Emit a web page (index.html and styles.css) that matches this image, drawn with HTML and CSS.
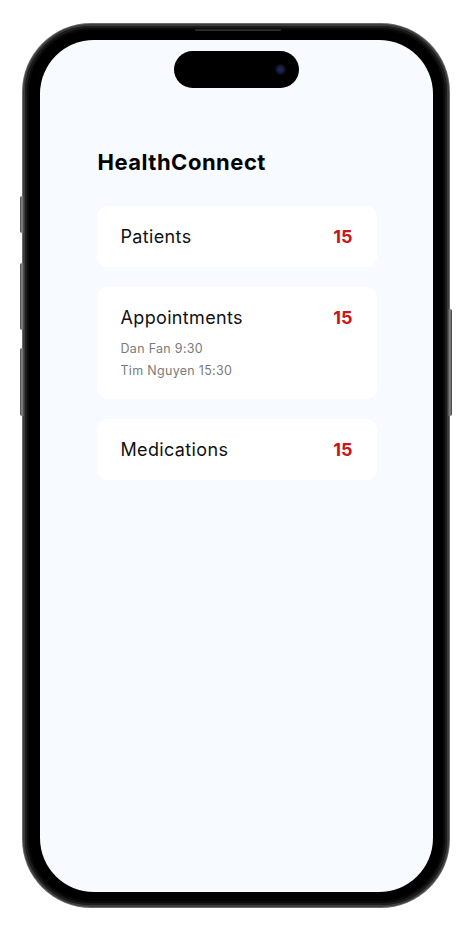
FILE: index.html
```html
<!DOCTYPE html>
<html lang="en">
<head>
<meta charset="utf-8">
<title>HealthConnect</title>
<link rel="stylesheet" href="styles.css">
</head>
<body>
<div class="stage">
  <div class="phone">
    <span class="btn btn-action"></span>
    <span class="btn btn-vol-up"></span>
    <span class="btn btn-vol-down"></span>
    <span class="btn btn-power"></span>
    <span class="speaker"></span>
    <div class="screen">
      <div class="island"><span class="cam"></span></div>
      <main class="content">
        <h1 class="title">HealthConnect</h1>
        <section class="card">
          <div class="card-head">
            <span class="card-label">Patients</span>
            <span class="card-count">15</span>
          </div>
        </section>
        <section class="card card-with-list">
          <div class="card-head">
            <span class="card-label">Appointments</span>
            <span class="card-count">15</span>
          </div>
          <ul class="card-list">
            <li>Dan Fan 9:30</li>
            <li>Tim Nguyen 15:30</li>
          </ul>
        </section>
        <section class="card">
          <div class="card-head">
            <span class="card-label">Medications</span>
            <span class="card-count">15</span>
          </div>
        </section>
      </main>
    </div>
  </div>
</div>
</body>
</html>
```
FILE: styles.css
```css
* { box-sizing: border-box; }
html, body { margin: 0; padding: 0; background: #ffffff; }
body { font-family: "Inter", "Noto Sans", sans-serif; }

.stage {
  width: 473px;
  height: 932px;
  padding: 24px 0 0 23px;
}

.phone {
  position: relative;
  width: 426px;
  height: 883px;
  border-radius: 68px;
  background: #000;
  border: 2px solid #3c3c3c;
  box-shadow: inset 0 0 0 2px #1c1c1c, inset 0 0 0 4px #0a0a0a, 0 0 0 1px #6a6a6a;
  padding: 14px 14px 13px 15px;
}

.speaker {
  position: absolute;
  top: 3px;
  left: 170px;
  width: 86px;
  height: 2px;
  background: #2a2a2a;
  border-radius: 1px;
}

.btn {
  position: absolute;
  width: 4px;
  background: linear-gradient(90deg, #4a4a4a, #8a8a8a 50%, #3a3a3a);
  border-radius: 2px 0 0 2px;
}
.btn-action { left: -5px; top: 170px; height: 37px; }
.btn-vol-up { left: -5px; top: 237px; height: 67px; }
.btn-vol-down { left: -5px; top: 322px; height: 68px; }
.btn-power { right: -5px; top: 283px; height: 107px; border-radius: 0 2px 2px 0; }

.screen {
  position: relative;
  width: 393px;
  height: 852px;
  border-radius: 54px;
  background: #f7fbff;
  overflow: hidden;
}

.island {
  position: absolute;
  top: 11px;
  left: 134px;
  width: 125px;
  height: 37px;
  border-radius: 19px;
  background: #000;
}
.cam {
  position: absolute;
  top: 13px;
  right: 13px;
  width: 11px;
  height: 11px;
  border-radius: 50%;
  background: radial-gradient(circle, #1e2550 0 25%, #0c0d1e 60%, #07070c 100%);
}

.content {
  width: 280px;
  margin: 0 auto;
  padding-top: 108px;
  display: flex;
  flex-direction: column;
  gap: 20px;
}

.title {
  margin: 0 0 10px 1px;
  font-size: 22px;
  line-height: 28px;
  font-weight: 700;
  color: #000;
  letter-spacing: 0.5px;
}

.card {
  background: #ffffff;
  border-radius: 11px;
  padding: 20px 24px;
}
.card-with-list { padding-bottom: 17px; }

.card-head {
  display: flex;
  justify-content: space-between;
  align-items: center;
  height: 21px;
}

.card-label {
  font-size: 18px;
  line-height: 21px;
  color: #111;
  letter-spacing: 0.35px;
}

.card-count {
  font-size: 18px;
  line-height: 21px;
  font-weight: 700;
  color: #c8161d;
}

.card-list {
  list-style: none;
  margin: 10px 0 0;
  padding: 0;
}
.card-list li {
  font-size: 12.5px;
  line-height: 22px;
  color: #7a7a7a;
  letter-spacing: 0.3px;
}
```
